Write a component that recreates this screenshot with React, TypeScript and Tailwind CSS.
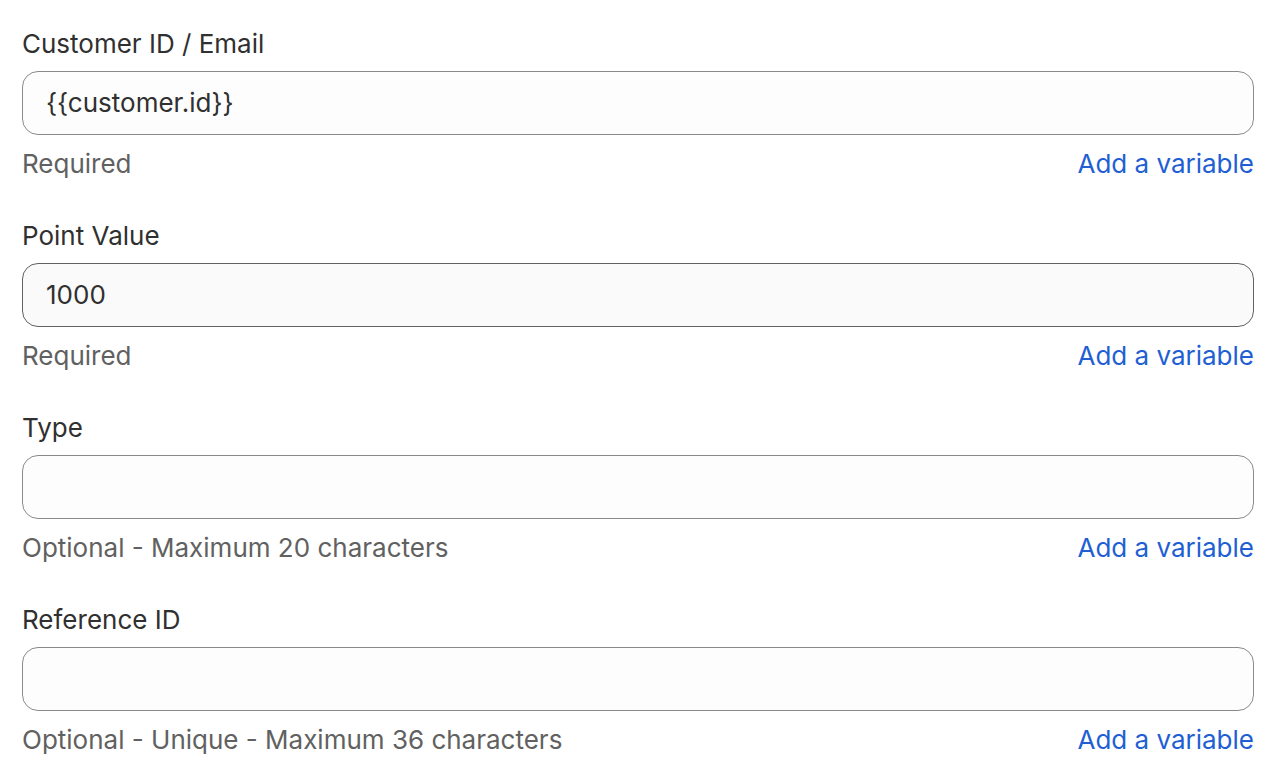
const fields = [
    { label: "Customer ID / Email", value: "{{customer.id}}", help: "Required", hover: false },
    { label: "Point Value", value: "1000", help: "Required", hover: true },
    { label: "Type", value: "", help: "Optional - Maximum 20 characters", hover: false },
    { label: "Reference ID", value: "", help: "Optional - Unique - Maximum 36 characters", hover: false },
];

const App = () => {
    return (
        <div className="min-h-screen bg-white pt-[28px] pl-[22px] pr-[20px] font-['Inter','Liberation_Sans',sans-serif] text-[26px] leading-[32px] text-[#303030]">
            <div className="flex flex-col gap-[40px]">
                {fields.map((field) => (
                    <div key={field.label} className="flex flex-col">
                        <label>{field.label}</label>
                        <div
                            className={
                                field.hover
                                    ? "mt-[11px] flex h-[64px] items-center rounded-[16px] border border-[#616161] bg-[#fafafa] px-[23px]"
                                    : "mt-[11px] flex h-[64px] items-center rounded-[16px] border border-[#8a8a8a] bg-[#fdfdfd] px-[23px]"
                            }
                        >
                            <input
                                readOnly
                                value={field.value}
                                className="w-full bg-transparent text-[26px] text-[#303030] outline-none"
                            />
                        </div>
                        <div className="mt-[13px] flex items-center justify-between">
                            <span className="text-[#616161]">{field.help}</span>
                            <a href="#" className="text-[#1f5fd3]">Add a variable</a>
                        </div>
                    </div>
                ))}
            </div>
        </div>
    );
};

export default App;
